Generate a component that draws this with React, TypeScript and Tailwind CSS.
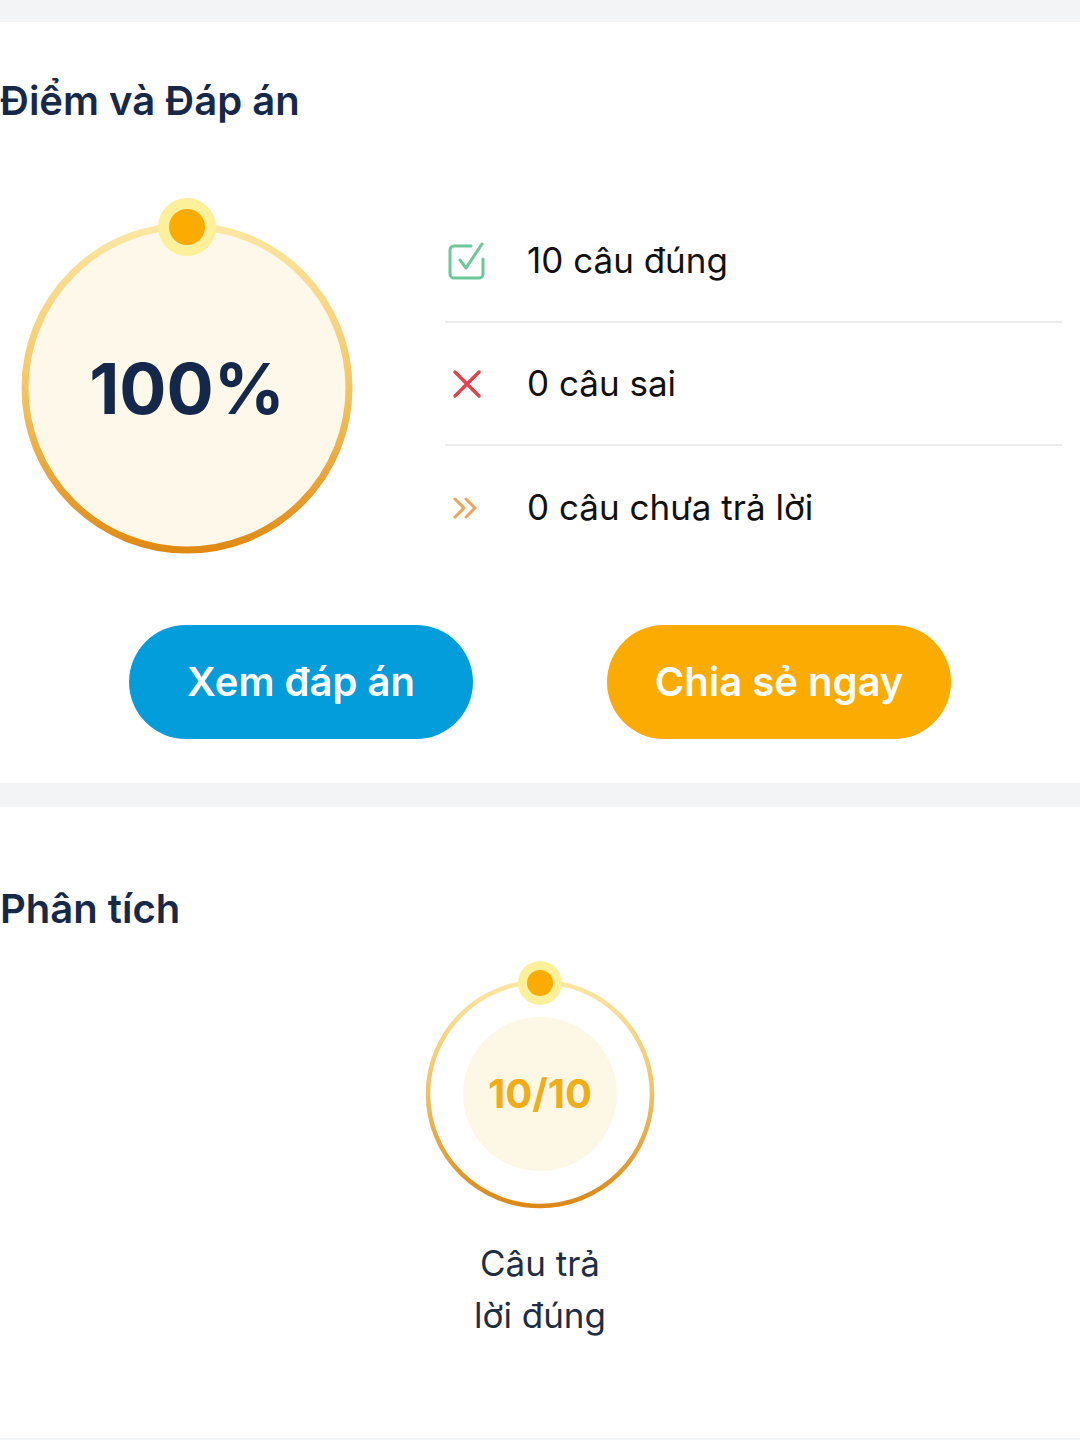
import React from "react";

const font = { fontFamily: "Inter, 'Noto Sans', sans-serif" };

function BigRing() {
  return (
    <svg width="350" height="372" viewBox="0 0 350 372" className="shrink-0">
      <defs>
        <linearGradient id="bg1" x1="0" y1="0" x2="0" y2="1">
          <stop offset="0" stopColor="#fde7a4" />
          <stop offset="0.5" stopColor="#f5c563" />
          <stop offset="1" stopColor="#e08a14" />
        </linearGradient>
      </defs>
      <circle cx="175" cy="193" r="162" fill="#fdf8e9" stroke="url(#bg1)" strokeWidth="7" />
      <circle cx="175" cy="32" r="29" fill="#fdf09a" />
      <circle cx="175" cy="32" r="18" fill="#fbab02" />
    </svg>
  );
}

function SmallRing() {
  return (
    <svg width="240" height="254" viewBox="0 0 240 254">
      <defs>
        <linearGradient id="bg2" x1="0" y1="0" x2="0" y2="1">
          <stop offset="0" stopColor="#fde7a4" />
          <stop offset="0.5" stopColor="#f0c062" />
          <stop offset="1" stopColor="#dc8816" />
        </linearGradient>
      </defs>
      <circle cx="120" cy="136" r="112" fill="#ffffff" stroke="url(#bg2)" strokeWidth="4.5" />
      <circle cx="120" cy="136" r="77" fill="#fdf7e6" />
      <circle cx="120" cy="25" r="22" fill="#fdf09a" />
      <circle cx="120" cy="25" r="13" fill="#fbab02" />
    </svg>
  );
}

function CheckIcon() {
  return (
    <svg width="44" height="44" viewBox="0 0 44 44" fill="none">
      <path d="M38 20v15a4 4 0 0 1-4 4H9a4 4 0 0 1-4-4V11a4 4 0 0 1 4-4h17" stroke="#6cc799" strokeWidth="3" strokeLinecap="round" strokeLinejoin="round" />
      <path d="M15 21l6 8L37 5" stroke="#6cc799" strokeWidth="3" strokeLinecap="round" strokeLinejoin="round" />
    </svg>
  );
}

function XIcon() {
  return (
    <svg width="44" height="44" viewBox="0 0 44 44" fill="none">
      <path d="M10 10l24 24M34 10L10 34" stroke="#e5424d" strokeWidth="3.5" strokeLinecap="round" />
    </svg>
  );
}

function ChevIcon() {
  return (
    <svg width="44" height="44" viewBox="0 0 44 44" fill="none">
      <path d="M10 13l9 9-9 9M21 13l9 9-9 9" stroke="#eca455" strokeWidth="3" strokeLinecap="round" strokeLinejoin="round" />
    </svg>
  );
}

function Row({ icon, text, border }: { icon: React.ReactNode; text: string; border?: boolean }) {
  return (
    <div className={`flex h-[123px] items-center ${border ? "border-b-2 border-[#ececec]" : ""}`}>
      <div className="flex w-[82px] items-center">{icon}</div>
      <span className="text-[35px] text-[#111111]" style={font}>{text}</span>
    </div>
  );
}

export default function App() {
  return (
    <div className="w-[1080px] min-h-[1440px] bg-[#f2f4f6] pt-[22px]" style={font}>
      <section className="bg-white pb-[44px]">
        <h2 className="pt-[59px] text-[40px] font-semibold leading-[40px] text-[#17294a]">Điểm và Đáp án</h2>
        <div className="mt-[74px] flex">
          <div className="relative ml-[12px]">
            <BigRing />
            <div className="absolute left-0 top-0 flex h-[386px] w-[350px] items-center justify-center">
              <span className="text-[70px] font-bold text-[#13284b]">100%</span>
            </div>
          </div>
          <div className="ml-[83px] mr-[18px] mt-[5px] flex-1">
            <Row icon={<CheckIcon />} text="10 câu đúng" border />
            <Row icon={<XIcon />} text="0 câu sai" border />
            <Row icon={<ChevIcon />} text="0 câu chưa trả lời" />
          </div>
        </div>
        <div className="mt-[56px] flex justify-center gap-[134px]">
          <button className="h-[114px] w-[344px] rounded-full bg-[#039ddb] text-[40px] font-semibold text-white">
            Xem đáp án
          </button>
          <button className="h-[114px] w-[344px] rounded-full bg-[#fbab02] text-[40px] font-semibold text-white">
            Chia sẻ ngay
          </button>
        </div>
      </section>
      <section className="mt-[24px] flex min-h-[631px] flex-col bg-white">
        <h2 className="pt-[82px] text-[40px] font-semibold leading-[40px] text-[#17294a]">Phân tích</h2>
        <div className="mt-[29px] flex flex-col items-center">
          <div className="relative">
            <SmallRing />
            <div className="absolute left-0 top-[22px] flex h-[228px] w-[240px] items-center justify-center">
              <span className="text-[40px] font-bold text-[#f0ad18]">10/10</span>
            </div>
          </div>
          <div className="mt-[25px] text-center text-[35px] leading-[52px] text-[#1f2e45]">
            <div>Câu trả</div>
            <div>lời đúng</div>
          </div>
        </div>
      </section>
    </div>
  );
}
